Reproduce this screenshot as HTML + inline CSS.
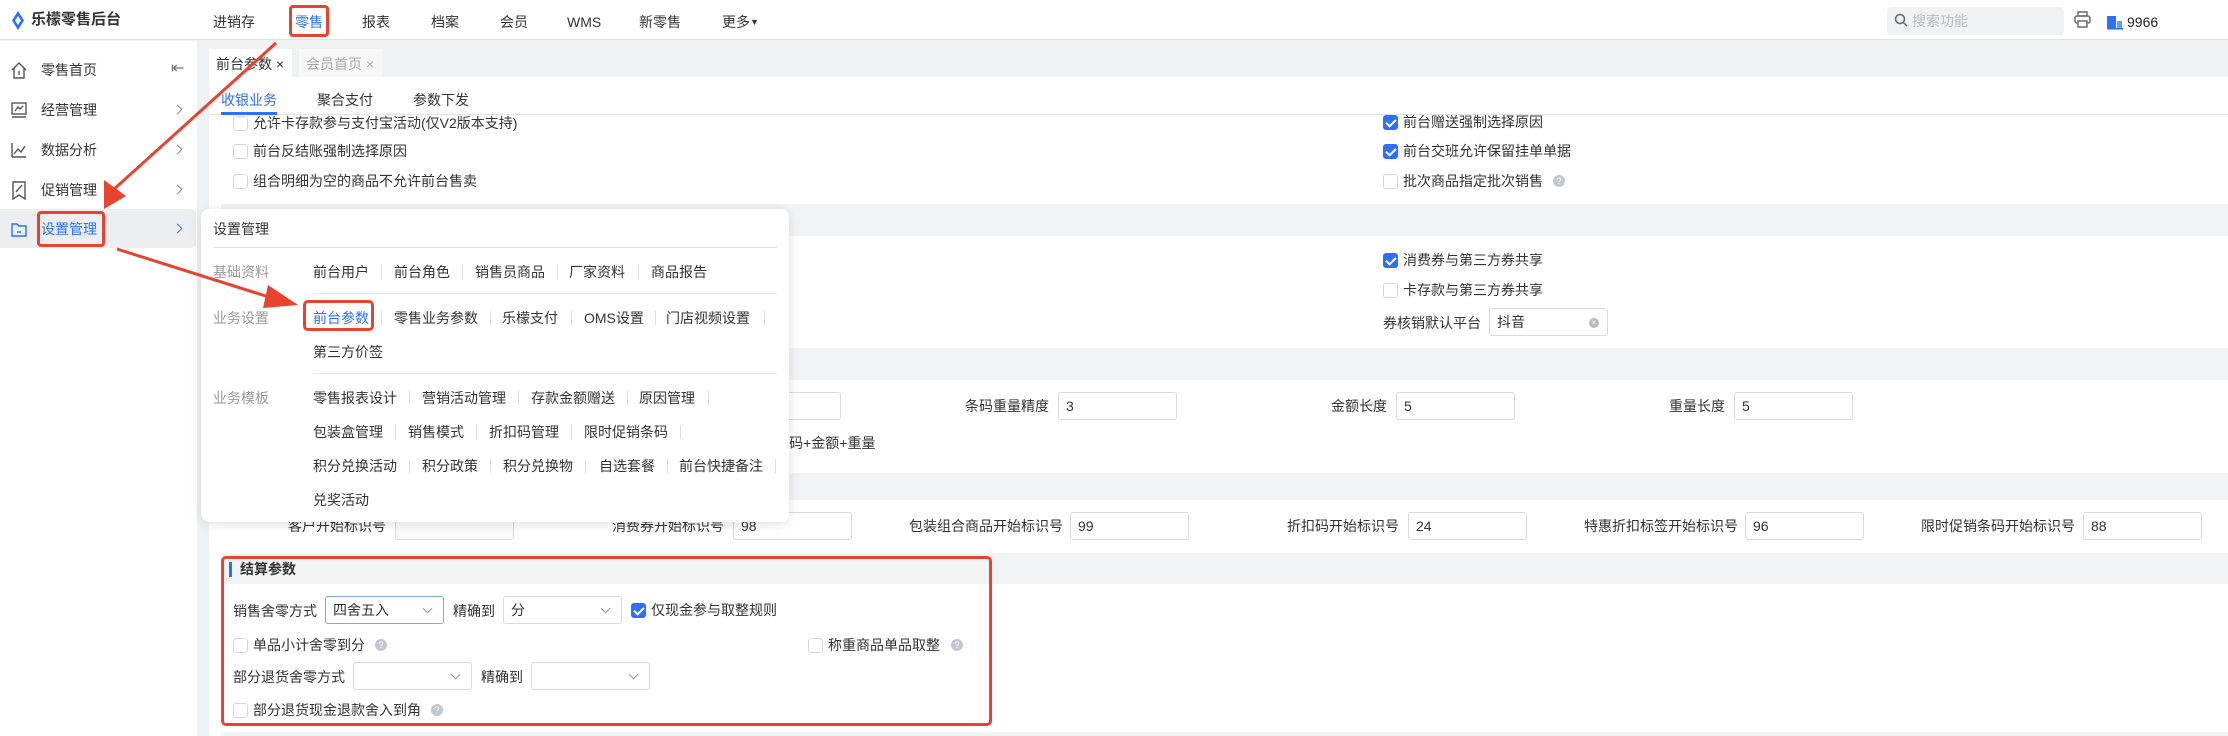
<!DOCTYPE html>
<html><head><meta charset="utf-8"><style>
*{margin:0;padding:0;box-sizing:border-box}
body{width:2228px;height:736px;overflow:hidden;position:relative;background:#f0f1f3;font-family:"Liberation Sans","Noto Sans CJK SC",sans-serif;font-size:14px;color:#333}
.a{position:absolute;white-space:nowrap;line-height:20px}
.cb{position:absolute;width:15px;height:15px;border:1px solid #d4d7de;border-radius:3px;background:#fff}
.cb.on{background:#2d6fff;border-color:#2d6fff}
.cb.on:after{content:"";position:absolute;left:4px;top:1px;width:4px;height:8px;border:solid #fff;border-width:0 2px 2px 0;transform:rotate(45deg)}
.in{position:absolute;height:28px;border:1px solid #d9d9d9;border-radius:3px;background:#fff;padding-left:7px;line-height:26px;width:119px}
.q{position:absolute;width:12px;height:12px;border-radius:50%;background:#c3c7d0;color:#fff;font-size:9px;line-height:12px;text-align:center}
.band{position:absolute;left:221px;right:0;background:#f2f3f5}
.sel:after{content:"";position:absolute;right:12px;top:8px;width:6px;height:6px;border:solid #999;border-width:0 1px 1px 0;transform:rotate(45deg)}
.pi{position:absolute;line-height:20px;white-space:nowrap}
.sep{position:absolute;width:1px;height:14px;background:#ddd}
.ic{position:absolute;left:10px}
.chev{position:absolute;left:174px;width:7px;height:7px;border:solid #888;border-width:1.5px 1.5px 0 0;transform:rotate(45deg)}
</style></head><body>
<!-- header -->
<div style="position:absolute;left:0;top:0;width:2228px;height:40px;background:#fff;border-bottom:1px solid #e2e2e2"></div>
<svg style="position:absolute;left:11px;top:11px" width="14" height="19" viewBox="0 0 14 19"><path d="M7 0 L13 9.5 L7 19 L1 9.5Z" fill="#2d6fff"/><path d="M7 5 L10 9.5 L7 14 L4 9.5Z" fill="#fff"/></svg>
<div class="a" style="left:31px;top:10px;font-size:15px;font-weight:bold;color:#333">乐檬零售后台</div>
<div class="a" style="left:213px;top:12px">进销存</div>
<div class="a" style="left:295px;top:12px;color:#2d6fff">零售</div>
<div style="position:absolute;left:289px;top:5px;width:40px;height:32px;border:3px solid #e8432e;border-radius:4px"></div>
<div class="a" style="left:362px;top:12px">报表</div>
<div class="a" style="left:431px;top:12px">档案</div>
<div class="a" style="left:500px;top:12px">会员</div>
<div class="a" style="left:567px;top:12px">WMS</div>
<div class="a" style="left:639px;top:12px">新零售</div>
<div class="a" style="left:722px;top:12px">更多<span style="font-size:9px;vertical-align:2px">▼</span></div>
<div style="position:absolute;left:1887px;top:7px;width:177px;height:28px;background:#f0f1f3;border-radius:4px"></div>
<svg style="position:absolute;left:1894px;top:13px" width="14" height="14" viewBox="0 0 14 14"><circle cx="6" cy="6" r="4.5" fill="none" stroke="#666" stroke-width="1.5"/><path d="M9.5 9.5 L13 13" stroke="#666" stroke-width="1.5"/></svg>
<div class="a" style="left:1912px;top:11px;color:#bbb">搜索功能</div>
<svg style="position:absolute;left:2074px;top:11px" width="17" height="17" viewBox="0 0 17 17"><rect x="4" y="1" width="9" height="4" fill="none" stroke="#777" stroke-width="1.6"/><rect x="1" y="5" width="15" height="7" rx="2" fill="none" stroke="#777" stroke-width="1.6"/><rect x="4" y="10" width="9" height="6" fill="#fff" stroke="#777" stroke-width="1.6"/></svg>
<svg style="position:absolute;left:2107px;top:14px" width="16" height="16"><rect x="0" y="2" width="9" height="12" fill="#2d6fff"/><rect x="10" y="7" width="5" height="7" fill="#6b9bff"/><rect x="0" y="14" width="16" height="1.5" fill="#2d6fff"/></svg>
<div class="a" style="left:2127px;top:12px;color:#222">9966</div>

<!-- sidebar -->
<div style="position:absolute;left:0;top:41px;width:197px;height:695px;background:#fff"></div>
<div style="position:absolute;left:0;top:209px;width:196px;height:39px;background:#eceef1;border-radius:0 6px 6px 0"></div>
<svg class="ic" style="top:61px" width="18" height="18" fill="none" stroke="#555" stroke-width="1.4"><path d="M2 9 L9 2 L16 9 M4 7 V17 H14 V7 M9 10 V14"/></svg>
<svg class="ic" style="top:101px" width="18" height="18" fill="none" stroke="#555" stroke-width="1.4"><rect x="2" y="2" width="14" height="11"/><path d="M2 16 H16 M5 10 L8 6 L10 8 L13 5"/></svg>
<svg class="ic" style="top:141px" width="18" height="18" fill="none" stroke="#555" stroke-width="1.4"><path d="M2 16 H16 M2 16 V2 M4 13 L8 8 L11 11 L15 5"/></svg>
<svg class="ic" style="top:180px" width="18" height="20" fill="none" stroke="#555" stroke-width="1.4"><path d="M3 2 H15 V19 L9 15 L3 19Z M6 12 L12 5"/></svg>
<svg class="ic" style="top:220px" width="18" height="18" fill="none" stroke="#2d6fff" stroke-width="1.4"><path d="M2 4 H7 L9 6 H16 V16 H2Z M7 12 H11"/></svg>
<div class="a" style="left:41px;top:60px">零售首页</div>
<div class="a" style="left:41px;top:100px">经营管理</div>
<div class="a" style="left:41px;top:140px">数据分析</div>
<div class="a" style="left:41px;top:180px">促销管理</div>
<div class="a" style="left:41px;top:219px;color:#2d6fff">设置管理</div>
<div style="position:absolute;left:37px;top:211px;width:68px;height:36px;border:3px solid #e8432e;border-radius:4px"></div>
<div class="a" style="left:171px;top:59px;color:#777;font-size:16px">⇤</div>
<div class="chev" style="top:106px"></div>
<div class="chev" style="top:146px"></div>
<div class="chev" style="top:186px"></div>
<div class="chev" style="top:225px;border-color:#2d6fff"></div>

<!-- tabs -->
<div style="position:absolute;left:209px;top:49px;width:83px;height:28px;background:#fff"></div>
<div class="a" style="left:216px;top:54px">前台参数 ×</div>
<div style="position:absolute;left:299px;top:49px;width:83px;height:28px;background:#f7f7f8"></div>
<div class="a" style="left:306px;top:54px;color:#aaa">会员首页 ×</div>

<!-- content -->
<div style="position:absolute;left:209px;top:77px;width:2019px;height:659px;background:#fff"></div>
<div style="position:absolute;left:209px;top:114px;width:2019px;height:1px;background:#e2e2e2"></div>
<div class="a" style="left:221px;top:90px;color:#2d6fff">收银业务</div>
<div style="position:absolute;left:221px;top:112px;width:56px;height:3px;background:#2d6fff"></div>
<div class="a" style="left:317px;top:90px">聚合支付</div>
<div class="a" style="left:413px;top:90px">参数下发</div>

<div class="cb" style="left:233px;top:116px"></div><div class="a" style="left:253px;top:113px">允许卡存款参与支付宝活动(仅V2版本支持)</div>
<div class="cb" style="left:233px;top:144px"></div><div class="a" style="left:253px;top:141px">前台反结账强制选择原因</div>
<div class="cb" style="left:233px;top:174px"></div><div class="a" style="left:253px;top:171px">组合明细为空的商品不允许前台售卖</div>
<div class="cb on" style="left:1383px;top:115px"></div><div class="a" style="left:1403px;top:112px">前台赠送强制选择原因</div>
<div class="cb on" style="left:1383px;top:144px"></div><div class="a" style="left:1403px;top:141px">前台交班允许保留挂单单据</div>
<div class="cb" style="left:1383px;top:174px"></div><div class="a" style="left:1403px;top:171px">批次商品指定批次销售</div><div class="q" style="left:1553px;top:175px">?</div>

<div class="band" style="top:204px;height:32px"></div>
<div class="cb on" style="left:1383px;top:253px"></div><div class="a" style="left:1403px;top:250px">消费券与第三方券共享</div>
<div class="cb" style="left:1383px;top:283px"></div><div class="a" style="left:1403px;top:280px">卡存款与第三方券共享</div>
<div class="a" style="left:1383px;top:313px">券核销默认平台</div>
<div class="in" style="left:1489px;top:308px">抖音<span style="position:absolute;right:8px;top:9px;width:10px;height:10px;border-radius:50%;background:#bbb;color:#fff;font-size:8px;line-height:10px;text-align:center">×</span></div>

<div class="band" style="top:348px;height:32px"></div>
<div class="in" style="left:768px;top:392px;width:73px"></div>
<div class="a" style="left:965px;top:396px">条码重量精度</div><div class="in" style="left:1058px;top:392px">3</div>
<div class="a" style="left:1331px;top:396px">金额长度</div><div class="in" style="left:1396px;top:392px">5</div>
<div class="a" style="left:1669px;top:396px">重量长度</div><div class="in" style="left:1734px;top:392px">5</div>
<div class="a" style="left:779px;top:433px">U码+金额+重量</div>

<div class="band" style="top:473px;height:27px"></div>
<div class="a" style="left:288px;top:516px">客户开始标识号</div><div class="in" style="left:395px;top:512px;background:#fafafa"></div>
<div class="a" style="left:612px;top:516px">消费券开始标识号</div><div class="in" style="left:733px;top:512px">98</div>
<div class="a" style="left:909px;top:516px">包装组合商品开始标识号</div><div class="in" style="left:1070px;top:512px">99</div>
<div class="a" style="left:1287px;top:516px">折扣码开始标识号</div><div class="in" style="left:1408px;top:512px">24</div>
<div class="a" style="left:1584px;top:516px">特惠折扣标签开始标识号</div><div class="in" style="left:1745px;top:512px">96</div>
<div class="a" style="left:1921px;top:516px">限时促销条码开始标识号</div><div class="in" style="left:2083px;top:512px">88</div>

<div class="band" style="top:553px;height:31px"></div>
<div style="position:absolute;left:229px;top:562px;width:3px;height:15px;background:#2d6fff"></div>
<div class="a" style="left:240px;top:559px;font-weight:bold">结算参数</div>
<div class="a" style="left:233px;top:601px">销售舍零方式</div>
<div class="in sel" style="left:325px;top:596px;border-color:#7aa7ff">四舍五入</div>
<div class="a" style="left:453px;top:601px">精确到</div>
<div class="in sel" style="left:503px;top:596px">分</div>
<div class="cb on" style="left:631px;top:603px"></div><div class="a" style="left:651px;top:600px">仅现金参与取整规则</div>
<div class="cb" style="left:233px;top:638px"></div><div class="a" style="left:253px;top:635px">单品小计舍零到分</div><div class="q" style="left:375px;top:639px">?</div>
<div class="cb" style="left:808px;top:638px"></div><div class="a" style="left:828px;top:635px">称重商品单品取整</div><div class="q" style="left:951px;top:639px">?</div>
<div class="a" style="left:233px;top:667px">部分退货舍零方式</div>
<div class="in sel" style="left:353px;top:662px"></div>
<div class="a" style="left:481px;top:667px">精确到</div>
<div class="in sel" style="left:531px;top:662px"></div>
<div class="cb" style="left:233px;top:703px"></div><div class="a" style="left:253px;top:700px">部分退货现金退款舍入到角</div><div class="q" style="left:431px;top:704px">?</div>
<div class="band" style="top:732px;height:4px"></div>
<div style="position:absolute;left:221px;top:556px;width:771px;height:170px;border:3px solid #e8432e;border-radius:5px"></div>

<!-- popup -->
<div style="position:absolute;left:201px;top:209px;width:588px;height:313px;background:#fff;border-radius:8px;box-shadow:0 2px 12px rgba(0,0,0,.12)"></div>
<div class="pi" style="left:213px;top:219px">设置管理</div>
<div style="position:absolute;left:213px;top:247px;width:564px;height:1px;background:#e2e2e2"></div>
<div class="pi" style="left:213px;top:262px;color:#999">基础资料</div>
<div class="pi" style="left:313px;top:262px">前台用户</div><div class="sep" style="left:381px;top:265px"></div>
<div class="pi" style="left:394px;top:262px">前台角色</div><div class="sep" style="left:462px;top:265px"></div>
<div class="pi" style="left:475px;top:262px">销售员商品</div><div class="sep" style="left:557px;top:265px"></div>
<div class="pi" style="left:569px;top:262px">厂家资料</div><div class="sep" style="left:638px;top:265px"></div>
<div class="pi" style="left:651px;top:262px">商品报告</div>
<div style="position:absolute;left:313px;top:293px;width:464px;height:1px;background:#e8e8e8"></div>
<div class="pi" style="left:213px;top:308px;color:#999">业务设置</div>
<div class="pi" style="left:313px;top:308px;color:#2d6fff">前台参数</div><div class="sep" style="left:381px;top:311px"></div>
<div style="position:absolute;left:303px;top:300px;width:71px;height:31px;border:3px solid #e8432e;border-radius:5px"></div>
<div class="pi" style="left:394px;top:308px">零售业务参数</div><div class="sep" style="left:490px;top:311px"></div>
<div class="pi" style="left:502px;top:308px">乐檬支付</div><div class="sep" style="left:571px;top:311px"></div>
<div class="pi" style="left:584px;top:308px">OMS设置</div><div class="sep" style="left:655px;top:311px"></div>
<div class="pi" style="left:666px;top:308px">门店视频设置</div><div class="sep" style="left:764px;top:311px"></div>
<div class="pi" style="left:313px;top:342px">第三方价签</div>
<div style="position:absolute;left:313px;top:373px;width:464px;height:1px;background:#e8e8e8"></div>
<div class="pi" style="left:213px;top:388px;color:#999">业务模板</div>
<div class="pi" style="left:313px;top:388px">零售报表设计</div><div class="sep" style="left:409px;top:391px"></div>
<div class="pi" style="left:422px;top:388px">营销活动管理</div><div class="sep" style="left:518px;top:391px"></div>
<div class="pi" style="left:531px;top:388px">存款金额赠送</div><div class="sep" style="left:627px;top:391px"></div>
<div class="pi" style="left:639px;top:388px">原因管理</div><div class="sep" style="left:708px;top:391px"></div>
<div class="pi" style="left:313px;top:422px">包装盒管理</div><div class="sep" style="left:395px;top:425px"></div>
<div class="pi" style="left:408px;top:422px">销售模式</div><div class="sep" style="left:476px;top:425px"></div>
<div class="pi" style="left:489px;top:422px">折扣码管理</div><div class="sep" style="left:571px;top:425px"></div>
<div class="pi" style="left:584px;top:422px">限时促销条码</div><div class="sep" style="left:680px;top:425px"></div>
<div class="pi" style="left:313px;top:456px">积分兑换活动</div><div class="sep" style="left:409px;top:459px"></div>
<div class="pi" style="left:422px;top:456px">积分政策</div><div class="sep" style="left:490px;top:459px"></div>
<div class="pi" style="left:503px;top:456px">积分兑换物</div><div class="sep" style="left:585px;top:459px"></div>
<div class="pi" style="left:599px;top:456px">自选套餐</div><div class="sep" style="left:667px;top:459px"></div>
<div class="pi" style="left:679px;top:456px">前台快捷备注</div><div class="sep" style="left:775px;top:459px"></div>
<div class="pi" style="left:313px;top:490px">兑奖活动</div>

<!-- arrows -->
<svg style="position:absolute;left:0;top:0" width="2228" height="736">
<line x1="276" y1="43" x2="113" y2="190" stroke="#e8432e" stroke-width="3"/>
<polygon points="104,209 104,180 126,196" fill="#e8432e"/>
<line x1="117" y1="249" x2="272" y2="298" stroke="#e8432e" stroke-width="3"/>
<polygon points="298,305 268,285 263,308" fill="#e8432e"/>
</svg>
</body></html>
